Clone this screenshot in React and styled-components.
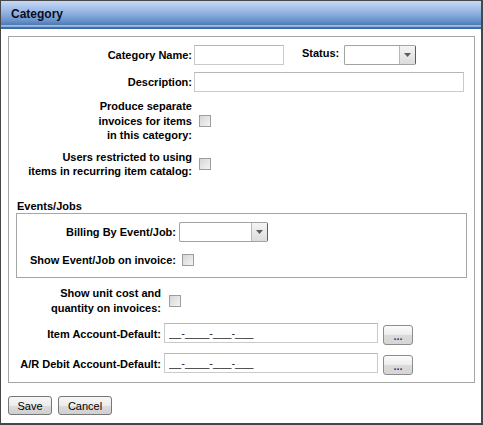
import React from 'react';
import styled, { createGlobalStyle } from 'styled-components';

const GlobalStyle = createGlobalStyle`
    html, body {
        margin: 0;
        padding: 0;
        background: #ffffff;
    }
    body {
        font-family: "Liberation Sans", Arial, sans-serif;
        font-size: 11px;
        color: #000000;
    }
`

const App = () => {
    return (
        <>
            <GlobalStyle />
            <Window>
                <TitleBar>Category</TitleBar>
                <Body>
                    <Panel>
                        <FormGrid $labelWidth={183} $gap={7}>
                            <Label>Category Name:</Label>
                            <Field $pad={2}>
                                <TextInput $width={90} />
                                <InlineLabel>Status:</InlineLabel>
                                <Select $width={72} />
                            </Field>

                            <Label>Description:</Label>
                            <Field $pad={2}>
                                <TextInput $width={270} />
                            </Field>

                            <Label>Produce separate<br />invoices for items<br />in this category:</Label>
                            <Field $pad={2}>
                                <Check type="checkbox" />
                            </Field>

                            <Label>Users restricted to using<br />items in recurring item catalog:</Label>
                            <Field $pad={2}>
                                <Check type="checkbox" />
                            </Field>
                        </FormGrid>

                        <GroupTitle>Events/Jobs</GroupTitle>
                        <GroupBox>
                            <FormGrid $labelWidth={159} $gap={11}>
                                <Label>Billing By Event/Job:</Label>
                                <Field $pad={3}>
                                    <Select $width={89} />
                                </Field>

                                <Label>Show Event/Job on invoice:</Label>
                                <Field $pad={1}>
                                    <Check type="checkbox" />
                                </Field>
                            </FormGrid>
                        </GroupBox>

                        <Section>
                            <FormGrid $labelWidth={152} $gap={8}>
                                <Label>Show unit cost and<br />quantity on invoices:</Label>
                                <Field $pad={3}>
                                    <Check type="checkbox" />
                                </Field>

                                <Label>Item Account-Default:</Label>
                                <Field $pad={3}>
                                    <TextInput $width={214} defaultValue="__-____-___-___" />
                                    <LookupButton>...</LookupButton>
                                </Field>

                                <Label>A/R Debit Account-Default:</Label>
                                <Field $pad={3}>
                                    <TextInput $width={214} defaultValue="__-____-___-___" />
                                    <LookupButton>...</LookupButton>
                                </Field>
                            </FormGrid>
                        </Section>
                    </Panel>

                    <ButtonBar>
                        <PushButton $width={44}>Save</PushButton>
                        <PushButton $width={54}>Cancel</PushButton>
                    </ButtonBar>
                </Body>
            </Window>
        </>
    )
}

const Select = ({ $width }) => (
    <SelectBox $width={$width}>
        <SelectValue />
        <SelectArrow>
            <svg width="7" height="4" viewBox="0 0 7 4">
                <path d="M0 0 L7 0 L3.5 4 Z" fill="#5c5c5c" />
            </svg>
        </SelectArrow>
    </SelectBox>
)

const Window = styled.div`
    width: 483px;
    height: 425px;
    box-sizing: border-box;
    border-style: solid;
    border-color: #474747;
    border-width: 1px 2px 2px 1px;
    display: flex;
    flex-direction: column;
    overflow: hidden;
    background: #ffffff;
`

const TitleBar = styled.div`
    height: 28px;
    line-height: 26px;
    padding-left: 10px;
    font-size: 12px;
    font-weight: bold;
    color: #0b0c1f;
    background: linear-gradient(
        to bottom,
        #c6daf6 0%,
        #b0c9ee 18%,
        #8dafdd 45%,
        #6a93c9 70%,
        #4f7cb6 84%,
        #a2bee4 86%,
        #8fb0dc 91%,
        #4071ad 93%,
        #3a67a3 100%
    );
`

const Body = styled.div`
    flex: 1;
    padding: 7px 6px 0 7px;
`

const Panel = styled.div`
    border: 1px solid #a6a6a6;
    padding: 8px 0 7px 0;
`

const FormGrid = styled.div`
    display: grid;
    grid-template-columns: ${p => p.$labelWidth}px 1fr;
    row-gap: ${p => p.$gap}px;
    align-items: center;
`

const Label = styled.div`
    text-align: right;
    font-weight: bold;
    line-height: 14.5px;
    white-space: nowrap;
`

const InlineLabel = styled.span`
    font-weight: bold;
    line-height: 14.5px;
    margin: 1px 5px 0 18px;
`

const Field = styled.div`
    display: flex;
    align-items: flex-start;
    padding-left: ${p => p.$pad}px;
`

const TextInput = styled.input`
    width: ${p => p.$width}px;
    height: 20px;
    box-sizing: border-box;
    margin: 0;
    padding: 0 4px;
    border: 1px solid #cacaca;
    border-top-color: #b4b6ba;
    font-family: "Liberation Sans", Arial, sans-serif;
    font-size: 11px;
    color: #222222;
    background: #ffffff;
    outline: none;
`

const SelectBox = styled.div`
    width: ${p => p.$width}px;
    height: 20px;
    box-sizing: border-box;
    display: flex;
    border: 1px solid #a3a3a3;
    border-right-color: #4d5d76;
    border-radius: 2px;
    background: #ffffff;
    overflow: hidden;
`

const SelectValue = styled.div`
    flex: 1;
`

const SelectArrow = styled.div`
    width: 15px;
    display: flex;
    align-items: center;
    justify-content: center;
    border-left: 1px solid #b8b8b8;
    background: linear-gradient(to bottom, #f4f4f4, #dcdcdc);
`

const Check = styled.input`
    appearance: none;
    width: 12px;
    height: 12px;
    margin: 0 0 0 5px;
    box-sizing: border-box;
    border: 1px solid #9d9d9d;
    background: linear-gradient(135deg, #d6d6d6, #f4f4f4);
`

const GroupTitle = styled.div`
    margin: 20px 0 0 8px;
    font-weight: bold;
    line-height: 14.5px;
`

const GroupBox = styled.div`
    margin: 0 7px;
    border: 1px solid #a6a6a6;
    padding: 8px 0 9.5px 0;
`

const Section = styled.div`
    margin-top: 8px;
`

const LookupButton = styled.button`
    width: 30px;
    height: 20px;
    margin: 2px 0 0 5px;
    padding: 0 0 2px;
    box-sizing: border-box;
    border: 1px solid #8c8c8c;
    border-radius: 3px;
    background: linear-gradient(to bottom, #fbfbfb 0%, #ededed 50%, #dadada 51%, #d6d6d6 100%);
    font-family: "Liberation Sans", Arial, sans-serif;
    font-size: 11px;
    font-weight: bold;
    color: #5d1a6a;
    line-height: 1;
    display: flex;
    align-items: flex-end;
    justify-content: center;
`

const ButtonBar = styled.div`
    display: flex;
    gap: 6px;
    margin-top: 13px;
`

const PushButton = styled.button`
    width: ${p => p.$width}px;
    height: 19px;
    margin: 0;
    padding: 0;
    box-sizing: border-box;
    border: 1px solid #777777;
    border-radius: 3px;
    background: linear-gradient(to bottom, #f7f7f7 0%, #ececec 50%, #dddddd 51%, #cfcfcf 100%);
    font-family: "Liberation Sans", Arial, sans-serif;
    font-size: 11px;
    color: #000000;
`

export default App
